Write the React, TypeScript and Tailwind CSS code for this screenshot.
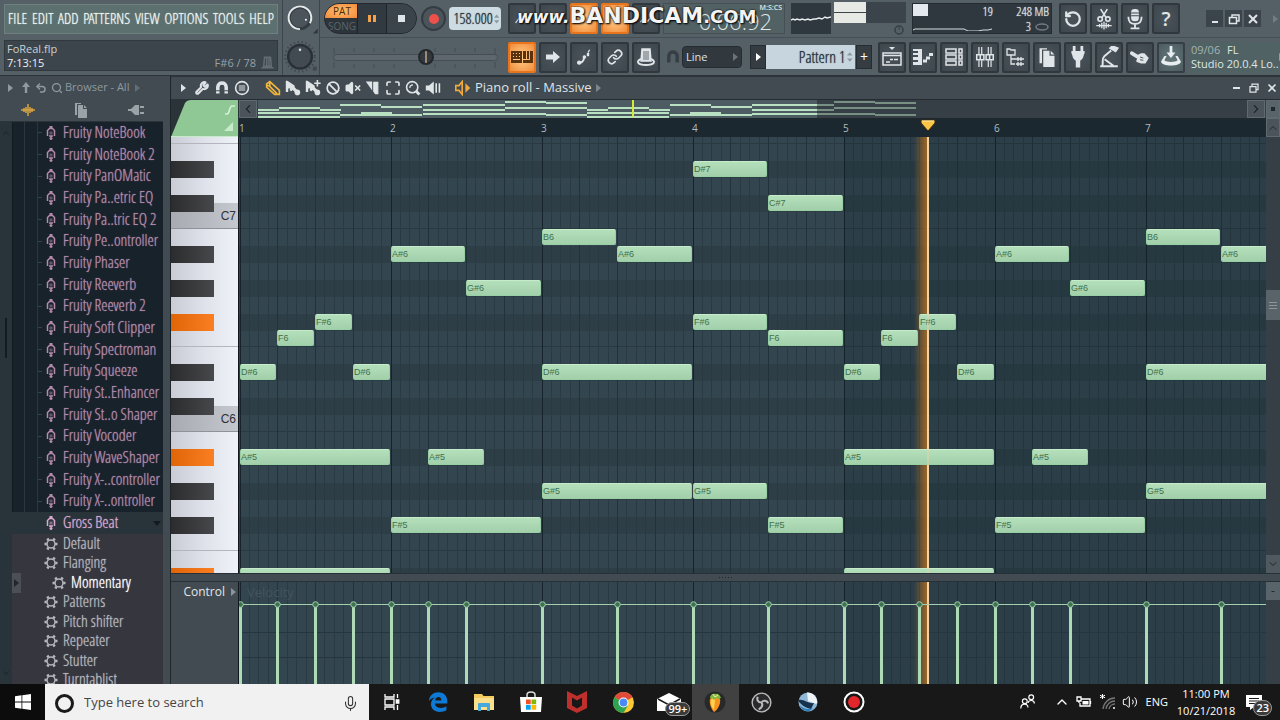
import type { ReactNode } from "react";
import {
  Ban,
  ChevronDown,
  ChevronLeft,
  ChevronRight,
  ChevronUp,
  Link,
  Maximize,
  Mic,
  RotateCcw,
  Search,
  Undo2,
  Volume2,
  VolumeX,
  Wrench,
  X,
} from "lucide-react";

const sans = "font-[family-name:'Open_Sans','Noto_Sans',sans-serif]";
const arial = "font-[family-name:'Liberation_Sans',Arial,sans-serif]";
const narrow =
  "font-light font-[family-name:'Open_Sans_Condensed_Light','Open_Sans_Condensed',sans-serif] [text-shadow:0_0_1px_currentColor]";

/* ---------- song data ---------- */

const BAR = 151;
const stepX = (step: number) => Math.floor((step * BAR) / 16) + 1;
const rowY = (row: number) => Math.round(7 + row * 16.95);

// [label, row below E7, first step, steps]
const phrase: [string, number, number, number][] = [
  ["D#6", 13, 0, 4],
  ["F6", 11, 4, 4],
  ["F#6", 10, 8, 4],
  ["D#6", 13, 12, 4],
  ["A#5", 18, 0, 16],
  ["D#5", 25, 0, 16],
  ["A#6", 6, 16, 8],
  ["G#6", 8, 24, 8],
  ["A#5", 18, 20, 6],
  ["F#5", 22, 16, 16],
  ["B6", 5, 32, 8],
  ["A#6", 6, 40, 8],
  ["D#6", 13, 32, 16],
  ["G#5", 20, 32, 16],
  ["D#7", 1, 48, 8],
  ["C#7", 3, 56, 8],
  ["F#6", 10, 48, 8],
  ["F6", 11, 56, 8],
  ["G#5", 20, 48, 8],
  ["F#5", 22, 56, 8],
];

const notes = [0, 64].flatMap((offset) =>
  phrase.map(([label, row, start, len]) => ({ label, row, start: start + offset, len }))
);

const velocitySteps = Array.from(new Set(notes.map((n) => n.start)));

const blackRows = [1, 3, 6, 8, 10, 13, 15, 18, 20, 22, 25];
const litRows = [10, 18, 25];
const cKeys = [
  { label: "C7", row: 4 },
  { label: "C6", row: 16 },
];

const plugins = [
  "Fruity NoteBook",
  "Fruity NoteBook 2",
  "Fruity PanOMatic",
  "Fruity Pa..etric EQ",
  "Fruity Pa..tric EQ 2",
  "Fruity Pe..ontroller",
  "Fruity Phaser",
  "Fruity Reeverb",
  "Fruity Reeverb 2",
  "Fruity Soft Clipper",
  "Fruity Spectroman",
  "Fruity Squeeze",
  "Fruity St..Enhancer",
  "Fruity St..o Shaper",
  "Fruity Vocoder",
  "Fruity WaveShaper",
  "Fruity X-..controller",
  "Fruity X-..ontroller",
];

const presets = ["Default", "Flanging", "Momentary", "Patterns", "Pitch shifter", "Repeater", "Stutter", "Turntablist"];

/* ---------- shared bits ---------- */

function Tri({ className = "" }: { className?: string }) {
  return (
    <svg viewBox="0 0 5 8" className={`h-2 w-[5px] shrink-0 ${className}`} fill="currentColor">
      <path d="M0 0 5 4 0 8z" />
    </svg>
  );
}

function ToolButton({
  label,
  active = false,
  tint = false,
  children,
}: {
  label: string;
  active?: boolean;
  tint?: boolean;
  children?: ReactNode;
}) {
  const look = active
    ? "border-[#e8741c] bg-radial from-[#ffd08a] to-[#f08a35] text-[#5a3210]"
    : tint
      ? "border-[#363f45] bg-radial from-[#64787a] to-[#4c5b60] text-[#e8eef0]"
      : "border-[#30373d] bg-radial from-[#4b535a] to-[#3f474e] text-[#dfe5e8]";
  return (
    <button
      aria-label={label}
      className={`flex h-[31px] w-7 shrink-0 items-center justify-center rounded-xs border-2 ${look}`}
    >
      {children}
    </button>
  );
}

function Glyph({ children, className = "size-5" }: { children: ReactNode; className?: string }) {
  return (
    <svg viewBox="0 0 20 20" className={`shrink-0 ${className}`} fill="none" stroke="currentColor" strokeWidth="1.5">
      {children}
    </svg>
  );
}

/* ---------- top toolbar ---------- */

const menus = ["FILE", "EDIT", "ADD", "PATTERNS", "VIEW", "OPTIONS", "TOOLS", "HELP"];

function MenuBlock() {
  return (
    <div className="flex w-[283px] shrink-0 flex-col gap-[6px] border-r border-[#3c454b] px-1 pt-1">
      <nav className="flex h-[30px] items-center justify-between border border-[#6f807f] bg-[#5b706f] px-[3px] pb-0.5">
        {menus.map((m) => (
          <button key={m} className={`text-[15px] leading-6 text-[#edf5f2] ${narrow}`}>
            {m}
          </button>
        ))}
      </nav>
      <div className="flex h-[31px] items-end justify-between border border-[#31393f] bg-[#3c454c] px-0.5 text-[11px] leading-[14px]">
        <div>
          <div className="text-[#c9d1d5]">FoReal.flp</div>
          <div className="text-[#eef2f4]">7:13:15</div>
        </div>
        <div className="flex items-end gap-1 text-[#98a1a7]">
          F#6 / 78
          <Glyph className="size-[15px] text-[#636d74]">
            <path d="M6 3h8l1 12H5zM9 4v10M12 4v10M2 17h16" strokeWidth="2" />
          </Glyph>
        </div>
      </div>
    </div>
  );
}

function Knobs() {
  return (
    <div className="flex w-[37px] shrink-0 flex-col items-center border-r border-[#3c454b]">
      <svg viewBox="0 0 36 38" className="h-[38px] w-9">
        <circle cx="17" cy="18" r="11" fill="#4b545b" stroke="#343c42" strokeWidth="3" />
        <path d="M17 29.500a11.500 11.500 0 1 1 10-6" fill="none" stroke="#e3e8ea" strokeWidth="2" />
        <circle cx="23" cy="20" r="1" fill="#fff" />
        <path d="M35 29v5h-5z" fill="#30383d" />
      </svg>
      <svg viewBox="0 0 36 38" className="h-[38px] w-9">
        <circle cx="17" cy="19" r="15" fill="none" stroke="#373f45" strokeWidth="2" strokeDasharray="1 3" />
        <circle cx="17" cy="19" r="12" fill="#434b52" stroke="#2a3136" strokeWidth="2.500" />
        <circle cx="17" cy="12" r="1.300" fill="#d4dadd" />
        <path d="M30 29h4v4h-4z" fill="#40484e" />
      </svg>
    </div>
  );
}

function Transport() {
  return (
    <div className="flex h-[31px] w-[93px] shrink-0 overflow-hidden rounded-2xl border border-[#23292e] bg-[#2d353b]">
      <div className="flex w-8 flex-col">
        <button className="h-[14px] bg-radial from-[#ffc06a] to-[#f3883a] pl-0.5 text-[10px] leading-[14px] text-[#4c2a0c]">
          PAT
        </button>
        <button className="flex-1 pl-0.5 text-[10px] leading-[14px] text-[#5b656c]">SONG</button>
      </div>
      <button aria-label="Pause" className="flex w-[30px] items-center justify-center gap-0.5 border-x border-[#1e2428] bg-[#323a41]">
        <span className="h-[7px] w-[3px] bg-[#f4a14a]" />
        <span className="h-[7px] w-[3px] bg-[#f4a14a]" />
      </button>
      <button aria-label="Stop" className="flex flex-1 items-center justify-center bg-[#3b444b]">
        <span className="size-[7px] bg-[#dfe5e8]" />
      </button>
    </div>
  );
}

function Spin() {
  return (
    <svg viewBox="0 0 6 12" className="h-3 w-1.5" fill="#8b99a1">
      <path d="M0 4.500 3 1l3 3.500zM0 7.500h6L3 11z" />
    </svg>
  );
}

function Watermark() {
  return (
    <div className="pointer-events-none absolute top-0 left-[9px] flex items-baseline font-[family-name:'DejaVu_Sans',sans-serif] font-bold whitespace-nowrap text-[#f4f4f4] [text-shadow:0_0_2px_#000,1px_1px_2px_#000]">
      <span className="text-[17px] leading-[26px] italic">www.</span>
      <span className="text-[22px] leading-[26px]">BANDICAM</span>
      <span className="text-lg leading-[26px]">.COM</span>
    </div>
  );
}

function TopRow() {
  return (
    <div className="flex h-[38px] items-center border-b border-[#454e54] pl-1">
      <Transport />
      <button
        aria-label="Record"
        className="ml-1 flex size-[25px] shrink-0 items-center justify-center rounded-full border-2 border-[#343c42] bg-[#4b545b]"
      >
        <span className="size-2.5 rounded-full bg-[#f0504a]" />
      </button>
      <label className="ml-[3px] flex h-[23px] w-[52px] shrink-0 items-center rounded-sm bg-[#cddbe2] pr-0.5">
        <input
          aria-label="Tempo"
          defaultValue="158.000"
          className={`w-full min-w-0 bg-transparent pr-px text-right text-[15px] text-[#27323a] ${narrow}`}
        />
        <Spin />
      </label>
      <div className="relative ml-[7px] flex shrink-0 items-center gap-[3px]">
        <ToolButton label="Typing keyboard">
          <Glyph className="size-4"><path d="M2 15 9 5l6 7" /></Glyph>
        </ToolButton>
        <ToolButton label="Countdown">
          <Glyph className="size-4"><circle cx="12" cy="9" r="5" /></Glyph>
        </ToolButton>
        <ToolButton label="Blend notes" active />
        <ToolButton label="Loop record" active />
        <ToolButton label="Step edit">
          <Glyph className="size-4"><path d="m3 14 5-6 4 5 6-8" /></Glyph>
        </ToolButton>
        <div className="relative flex h-[31px] w-[122px] items-end justify-end border border-[#454f54] bg-[#526163] pr-3 text-[22px] leading-6 font-light text-[#dfe8e6]">
          0:06.92
          <span className="absolute top-0 right-0.5 text-[7px] leading-2 font-semibold text-[#dfe8e6]">M:S:CS</span>
        </div>
        <Watermark />
      </div>
      <div className="ml-1.5 flex h-[31px] w-10 shrink-0 items-center bg-[#2f383f]">
        <svg viewBox="0 0 40 6" className="h-1.5 w-10" fill="none" stroke="#e6ecee" strokeWidth="1.500">
          <path d="M0 4l2-1 2 1 2-1 3 1 2-1 3 1 3-1 2 1 4-1 2 0 3-1 3 1 3-2 2 1 4-1" />
        </svg>
      </div>
      <div className="ml-[3px] flex w-[72px] shrink-0 flex-col items-end">
        <div className="flex h-[21px] w-full flex-col gap-px bg-[#3b444a]">
          <span className="h-2.5 w-8 bg-[#e7e9e4]" />
          <span className="h-2.5 w-8 bg-[#e7e9e4]" />
        </div>
        <svg viewBox="0 0 10 10" className="mt-0.5 mr-0.5 size-2.5">
          <circle cx="5" cy="5" r="4" fill="none" stroke="#363e44" strokeWidth="1.500" />
          <path d="M5 5V2" stroke="#363e44" />
        </svg>
      </div>
      <div className="ml-1.5 flex h-[31px] w-[140px] shrink-0 border border-[#252c31] bg-[#2f383f] text-[13px] leading-[15px] text-[#e2e8ea]">
        <div className="flex w-20 flex-col">
          <div className={`flex justify-between ${narrow}`}>
            <span className="h-3 w-[15px] bg-[#e3e9ef]" />
            <span>19</span>
          </div>
          <svg viewBox="0 0 80 12" className="h-3 w-full" fill="none" stroke="#d7dee1">
            <path d="M0 11l2-1h49l4 2h10l5-1 5 0 4-1" />
          </svg>
        </div>
        <div className={`flex flex-1 flex-col items-end pr-0.5 ${narrow}`}>
          <span>248 MB</span>
          <span className="flex items-center gap-1">
            3
            <svg viewBox="0 0 14 8" className="h-2 w-3.5">
              <ellipse cx="7" cy="4" rx="6" ry="3" fill="none" stroke="#707a80" strokeWidth="1.500" />
            </svg>
          </span>
        </div>
      </div>
      <div className="ml-[7px] flex shrink-0 gap-[3px]">
        <ToolButton label="Undo"><RotateCcw className="size-[18px]" strokeWidth={3} /></ToolButton>
        <ToolButton label="Cut">
          <Glyph className="size-[22px]">
            <path d="M7 1l5 8M13 1L8 9" />
            <circle cx="6.500" cy="10" r="2" />
            <circle cx="13.500" cy="10" r="2" />
            <path d="M3 16h14M6 14.500v3M8 13.500v5M10 12.500v7M12 13.500v5M14 14.500v3" strokeWidth="1.200" />
          </Glyph>
        </ToolButton>
        <ToolButton label="Record audio">
          <Glyph className="size-[22px]">
            <rect x="6.500" y="1" width="7" height="11" rx="3" fill="currentColor" stroke="none" />
            <path d="M6.500 4.500h7M6.500 7h7" stroke="#41494f" strokeWidth="1" />
            <path d="M4 8c0 5 2 6.500 6 6.500s6-1.500 6-6.500M10 14v4M6 18.500h8" strokeWidth="1.700" />
          </Glyph>
        </ToolButton>
        <ToolButton label="Help"><span className="text-xl leading-5 font-semibold">?</span></ToolButton>
      </div>
      <div className="ml-auto flex shrink-0 items-center gap-0.5 text-[#dfe5e8]">
        <WinButton label="Minimize"><path d="M3 9h6" strokeWidth="2" /></WinButton>
        <WinButton label="Restore"><path d="M4 4V2h7v6H9M1.500 4.500h7v6h-7z" /></WinButton>
        <WinButton label="Close"><path d="m2 2 8 8M10 2l-8 8" strokeWidth="2" /></WinButton>
      </div>
      <Tri className="mx-3 mr-0.5 text-[#737d83]" />
    </div>
  );
}

function WinButton({ label, children }: { label: string; children: ReactNode }) {
  return (
    <button aria-label={label} className="flex size-[17px] items-center justify-center bg-[#3b444a]">
      <svg viewBox="0 0 12 12" className="size-3" fill="none" stroke="currentColor" strokeWidth="1.500">
        {children}
      </svg>
    </button>
  );
}

function PitchSlider() {
  return (
    <div className="relative h-[31px] w-[165px] shrink-0">
      <svg viewBox="0 0 165 31" className="h-[31px] w-full" stroke="#434c52">
        <path d="M1 6v6M21 6v4M41 6v4M61 6v4M102 6v4M122 6v4M142 6v4M162 6v6M1 20v6M21 22v4M41 22v4M61 22v4M102 22v4M122 22v4M142 22v4M162 20v6" />
      </svg>
      <input
        type="range"
        aria-label="Main pitch"
        defaultValue={57}
        className="absolute inset-x-0 top-3 h-[7px] w-full appearance-none rounded-full border border-[#454e54] bg-[#5d676d] [&::-webkit-slider-thumb]:size-4 [&::-webkit-slider-thumb]:appearance-none [&::-webkit-slider-thumb]:rounded-full [&::-webkit-slider-thumb]:border-2 [&::-webkit-slider-thumb]:border-[#23282c] [&::-webkit-slider-thumb]:bg-linear-to-r [&::-webkit-slider-thumb]:from-[#33393e] [&::-webkit-slider-thumb]:from-40% [&::-webkit-slider-thumb]:via-[#f0c9a0] [&::-webkit-slider-thumb]:to-[#33393e] [&::-webkit-slider-thumb]:to-60%"
      />
    </div>
  );
}

function BottomRow() {
  return (
    <div className="flex h-[38px] items-center pl-[13px]">
      <PitchSlider />
      <div className="ml-2.5 flex shrink-0 gap-[3px]">
        <ToolButton label="Piano keyboard" active>
          <svg viewBox="0 0 22 12" className="h-3 w-[22px]" fill="#5a3210">
            <path d="M0 0h11v12H0z" />
            <path d="M2 2h1v1H2zm3 0h1v1H5zm3 0h1v1H8zM2 5h1v1H2zm3 0h1v1H5zm3 0h1v1H8zM2 8h7v1H2z" fill="#ffc884" />
            <path d="M12 0h3v8h-3zM16 0h2v8h-2zM19 0h3v12H12V9h7z" />
          </svg>
        </ToolButton>
        <ToolButton label="Scroll">
          <svg viewBox="0 0 16 12" className="h-3 w-4" fill="currentColor"><path d="M1 3.500h7V0l7 6-7 6V8.500H1z" /></svg>
        </ToolButton>
        <ToolButton label="Step">
          <Glyph className="size-4">
            <path d="M2 17c5 1 8-2 8-6" strokeWidth="2.500" />
            <circle cx="4" cy="17" r="2" fill="currentColor" />
            <circle cx="10.500" cy="10" r="1.500" fill="currentColor" />
            <path d="M15 9V5" strokeWidth="3" />
            <path d="M15 4.500 17 1" strokeWidth="1.500" />
          </Glyph>
        </ToolButton>
        <ToolButton label="Link"><Link className="size-4" strokeWidth={2.5} /></ToolButton>
        <ToolButton label="Metronome">
          <Glyph>
            <path d="M6 2h8l1 12H5z" fill="currentColor" />
            <path d="M8 4v9M10 4v9M12 4v9" stroke="#41494f" strokeWidth=".8" />
            <path d="M5 12c-5 2-4 6 5 6s10-4 5-6" strokeWidth="2" />
          </Glyph>
        </ToolButton>
      </div>
      <Glyph className="ml-1.5 size-3.5 text-[#373f45]"><path d="M4 18V9c0-8 12-8 12 0v9" strokeWidth="5" /></Glyph>
      <div className="relative ml-0.5 shrink-0">
        <select
          aria-label="Snap"
          className="block h-[22px] w-[60px] appearance-none rounded-sm border border-[#262d32] bg-[#31393f] pl-[3px] text-[11px] text-[#dde3e6]"
        >
          <option>Line</option>
        </select>
        <Tri className="pointer-events-none absolute top-[7px] right-1 text-[#68737a]" />
      </div>
      <button aria-label="Play pattern" className="ml-2 flex h-6 w-4 shrink-0 items-center justify-center border border-[#262d32] bg-[#353d43] text-white">
        <Tri />
      </button>
      <div className="flex h-6 w-[89px] shrink-0 items-center bg-[#c6d5de] pr-0.5">
        <select
          aria-label="Pattern"
          className={`w-full min-w-0 appearance-none pr-0.5 text-base text-[#26313a] [text-align-last:right] ${narrow}`}
        >
          <option>Pattern 1</option>
        </select>
        <Spin />
      </div>
      <button aria-label="Add pattern" className="ml-px flex h-6 w-4 shrink-0 items-center justify-center border border-[#262d32] bg-[#353d43] text-sm text-white">
        +
      </button>
      <div className="ml-1.5 flex shrink-0 gap-[3px]">
        <ToolButton label="Playlist">
          <Glyph><path d="M1 6h18v12H1zM1 8.500h18M4 15h4M8 12.500h3M12 12.500h4" /><path d="M7 0h6l-3 3z" fill="currentColor" stroke="none" /></Glyph>
        </ToolButton>
        <ToolButton label="Piano roll">
          <Glyph><path d="M0 2h9v16H0v-3h5v-2H0v-3h5V8H0V6h5V4H0z" fill="currentColor" stroke="none" /><path d="M10 14h4M13 11h4M16 7.500h4" strokeWidth="3" /></Glyph>
        </ToolButton>
        <ToolButton label="Channel rack">
          <Glyph><path d="M2 2h10v4H2zM2 8h10v4H2zM2 14h10v4H2zM15 2h3v4h-3zM15 8h3v4h-3zM15 14h3v4h-3z" /></Glyph>
        </ToolButton>
        <ToolButton label="Mixer">
          <Glyph className="size-[22px]">
            <path d="M4.500 1v7M7 1v7M4.500 13v6M7 13v6M13 1v7M15.500 1v7M13 13v6M15.500 13v6" strokeWidth="1.100" />
            <path d="M2.500 8h6.500v4.500H2.500zM11 8h6.500v4.500H11zM5.700 8v4.500M14.200 8v4.500" strokeWidth="1.400" />
          </Glyph>
        </ToolButton>
        <ToolButton label="Browser">
          <Glyph><path d="M1 2h3l1 1h4v5H1zM5 8v9h4M5 12h5M10 12h8M10 17h8M12 10v4M15 10v4M12 15v4M15 15v4" strokeWidth="1.300" /></Glyph>
        </ToolButton>
        <ToolButton label="Project files"><Files className="size-5" /></ToolButton>
        <ToolButton label="Plugins">
          <Glyph className="size-[22px]"><path d="M6.500 0v5M13.500 0v5" strokeWidth="2.500" /><path d="M4 4.500h12v2c-1 1-1 4-2 5l-2 2v6H8v-6l-2-2c-1-1-1-4-2-5z" fill="currentColor" stroke="none" /></Glyph>
        </ToolButton>
        <ToolButton label="Tempo tapper">
          <Glyph className="size-[22px]"><path d="m11 2 5 3 2-3-5-2z" fill="currentColor" /><path d="M12 4 6 9M6 9c-3 3-1 5-2 9M6 12l8 6M2 18.500h16" strokeWidth="1.800" /></Glyph>
        </ToolButton>
        <ToolButton label="Touch">
          <Glyph className="size-[22px]">
            <path d="M1 6q1-2 3-.5L8 8l3-1.500h3L18 11l-3 5h-4l-4-1.500q-1-1 0-2l.5-1L1.500 8Q.5 7 1 6z" fill="currentColor" stroke="none" />
            <path d="m10 10 3 1M10 12.500l3 .5" stroke="#41494f" strokeWidth=".8" />
          </Glyph>
        </ToolButton>
        <ToolButton label="Download" tint>
          <Glyph className="size-[22px]">
            <path d="M10 0v7" strokeWidth="2.500" />
            <path d="m6 6 4 5 4-5z" fill="currentColor" stroke="none" />
            <path d="M4 9 1 14c0 5 18 5 18 0l-3-5h-2l2 4c-2 2-10 2-12 0l2-4z" fill="currentColor" stroke="none" />
          </Glyph>
        </ToolButton>
      </div>
      <div className="ml-1 flex h-[31px] min-w-0 flex-1 items-center justify-between bg-[#506264] pr-0.5 pl-0.5 text-[11px] leading-[14px] whitespace-nowrap text-[#dce8e4]">
        <div>
          <div><span className="mr-1 text-[#a3b3b1]">09/06</span> FL</div>
          <div>Studio 20.0.4 Lo..</div>
        </div>
        <Tri className="text-[#8fa09f]" />
      </div>
    </div>
  );
}

function Files({ className = "" }: { className?: string }) {
  return (
    <svg viewBox="0 0 16 16" className={className} fill="currentColor">
      <path d="M2 1h6v1H4v11H2z" />
      <path d="M5 3h5v4h4v9H5zM11 3l3 3h-3z" />
    </svg>
  );
}

/* ---------- browser ---------- */

function PlugIcon() {
  return (
    <svg viewBox="0 0 10 14" className="h-3.5 w-2.5 shrink-0" fill="none" stroke="currentColor">
      <path d="M1.500 10V4.500L3.500 2.500h3l2 2V10" strokeWidth="1.500" />
      <path d="M3.500 0h3v2h-3z" fill="currentColor" stroke="none" />
      <path d="M3.500 5.500h3v3h-3z" fill="currentColor" stroke="none" opacity=".5" />
      <path d="M3 10h4M5 10v4M3.500 12.500h3" strokeWidth="1.500" />
    </svg>
  );
}

function GearIcon() {
  return (
    <svg viewBox="0 0 14 14" className="size-3.5 shrink-0" fill="none" stroke="currentColor">
      <circle cx="7" cy="7" r="4" strokeWidth="1.500" />
      <path d="M4.500 3.200 3.300 1.500M9.500 3.200l1.200-1.700M2.800 7H.5M11.200 7h2.300M4.500 10.800l-1.200 1.700M9.500 10.800l1.200 1.700" strokeWidth="2.500" />
    </svg>
  );
}

function Browser() {
  return (
    <aside className="flex w-[163px] shrink-0 flex-col bg-[#414b51]">
      <header className="flex h-[23px] items-center pl-2 text-[11px] text-[#8f999f]">
        <Tri />
        <svg viewBox="0 0 10 12" className="ml-2 h-3 w-2.5" fill="currentColor"><path d="M5 0l4 5H6.200v6H3.800V5H1z" /></svg>
        <Undo2 className="ml-1 size-3" strokeWidth={3} />
        <Search className="mr-0.5 ml-1 size-3" strokeWidth={2.5} />
        <span className="whitespace-nowrap">Browser - All</span>
        <Tri className="ml-1.5 text-[#646e74]" />
      </header>
      <div className="flex h-[23px] items-center justify-around border-b border-[#2b343a] pl-0.5 text-[#9aa3a8]">
        <button aria-label="Sounds" className="text-[#d9a441]">
          <svg viewBox="0 0 14 12" className="h-3 w-3.5" stroke="currentColor" strokeWidth="1.500"><path d="M0 6h14M3 4v4M5 3v6M7 0v12M9 3v6M11 4v4" /></svg>
        </button>
        <button aria-label="Files"><Files className="size-4" /></button>
        <button aria-label="Plugin database">
          <svg viewBox="0 0 16 12" className="h-3 w-4" fill="currentColor"><path d="M0 5h3l4-4h4v10H7L3 7H0zM12 2h4v2h-4zM12 8h4v2h-4z" /></svg>
        </button>
      </div>
      <div className="flex min-h-0 flex-1">
        <div className="flex w-3 shrink-0 flex-col items-center bg-[#29333a] py-1.5 text-[#151d22]">
          <ChevronUp className="size-2.5" />
          <span className="mt-[180px] mb-auto h-10 w-0.5 bg-[#141c21]" />
          <ChevronDown className="size-2.5" />
        </div>
        <div className={`min-w-0 flex-1 overflow-hidden bg-[#17222a] text-base leading-[18px] whitespace-nowrap ${narrow}`}>
          <ul className="flex h-[390px] flex-col border-l border-[#111a20] pl-[11px] text-[#b58aac]">
            {plugins.map((p) => (
              <li key={p} className="flex flex-1 items-center border-l border-[#2b373e] pl-3">
                <span className="flex h-full items-center border-l border-[#2b373e]">
                  <span className="mr-1 h-px w-1 bg-[#35424a]" />
                </span>
                <PlugIcon />
                <span className="ml-[7px] pb-0.5">{p}</span>
              </li>
            ))}
          </ul>
          <div className="flex h-[22px] items-center bg-[#28343a] pr-0.5 pl-[34px] text-[#dba9d2]">
            <PlugIcon />
            <span className="mr-auto ml-[7px] pb-0.5">Gross Beat</span>
            <svg viewBox="0 0 8 5" className="h-[5px] w-2" fill="#121a1f"><path d="M0 0h8L4 5z" /></svg>
          </div>
          <ul className="flex h-[156px] flex-col bg-[#35363e] text-[#b6b8bf]">
            {presets.map((p) =>
              p === "Momentary" ? (
                <li key={p} className="flex min-h-0 flex-1 items-center text-white">
                  <span className="flex h-full w-[9px] items-center justify-center bg-[#4d4f57] text-[#24262b]"><Tri /></span>
                  <span className="ml-[31px] text-[#b6b8bf]"><GearIcon /></span>
                  <span className="ml-[5px] pb-0.5">{p}</span>
                </li>
              ) : (
                <li key={p} className="flex min-h-0 flex-1 items-center pl-8">
                  <GearIcon />
                  <span className="ml-[5px] pb-0.5">{p}</span>
                </li>
              )
            )}
          </ul>
        </div>
      </div>
    </aside>
  );
}

/* ---------- piano roll ---------- */

function RollTools() {
  return (
    <header className="flex h-[23px] shrink-0 items-center border-t border-[#2c3439] bg-[#424b52] pl-2.5 text-[#dfe4e7]">
      <Tri />
      <div className="ml-1.5 flex">
        <Tool label="Options"><Wrench className="size-3.5" strokeWidth={3.5} /></Tool>
        <Tool label="Magnet">
          <Glyph className="size-3.5"><path d="M4 18V9c0-8 12-8 12 0v9" strokeWidth="5" /><path d="M1 14h6M13 14h6" stroke="#424b52" strokeWidth="1.500" /></Glyph>
        </Tool>
        <Tool label="Stamp"><Glyph className="size-4"><circle cx="10" cy="10" r="8" strokeWidth="2" /><path d="M6 7.500h8M6 10h8M6 12.500h8" /></Glyph></Tool>
      </div>
      <div className="ml-[11px] flex">
        <Tool label="Draw"><Glyph className="size-4 text-[#f0b53c]"><path d="m2 5 4-3 12 11v5h-6L2 9zM6 3v5l9 9M2 7h5" strokeWidth="2" /></Glyph></Tool>
        <Tool label="Paint"><Brush /></Tool>
        <Tool label="Paint drums"><Brush plus /></Tool>
        <Tool label="Delete"><Ban className="size-3.5" strokeWidth={3} /></Tool>
        <Tool label="Mute"><VolumeX className="size-4 fill-current" strokeWidth={2.5} /></Tool>
        <Tool label="Slice"><Glyph className="size-4"><path d="M1 2h8v11z" fill="currentColor" stroke="none" /><path d="M11 3h5v14h-3l-2-3z" fill="currentColor" /></Glyph></Tool>
        <Tool label="Select"><Maximize className="size-4" strokeWidth={2.5} /></Tool>
        <Tool label="Zoom"><Glyph className="size-4"><circle cx="9" cy="9" r="7" strokeWidth="2" /><path d="M6 10c0-3 2-4 4-4" /><path d="m14 14 4 4" strokeWidth="3.500" /></Glyph></Tool>
        <Tool label="Playback"><Glyph className="size-4"><path d="M1 7h4l6-5v16l-6-5H1z" fill="currentColor" stroke="none" /><path d="M14 4v12M18 4v12" strokeWidth="2" /></Glyph></Tool>
      </div>
      <Glyph className="ml-3 size-4 text-[#f0a93c]"><path d="M1 7h4l4-5v16l-4-5H1z" strokeWidth="2" /><path d="m13 4 6 6-6 6z" fill="currentColor" stroke="none" /></Glyph>
      <h1 className="ml-1 text-[13px]">Piano roll - Massive</h1>
      <Tri className="ml-1 text-[#7d878d]" />
      <div className="ml-auto flex items-center gap-[7px] pr-0.5">
        <Glyph className="size-2.5"><path d="M2 10h14" strokeWidth="4" /></Glyph>
        <Glyph className="size-2.5"><path d="M6 6V2h12v11h-4M2 7h12v11H2z" strokeWidth="2.500" /></Glyph>
        <X className="size-3" strokeWidth={3.5} />
      </div>
    </header>
  );
}

function Tool({ label, children }: { label: string; children: ReactNode }) {
  return (
    <button aria-label={label} className="flex w-5 items-center justify-center">
      {children}
    </button>
  );
}

function Brush({ plus = false }: { plus?: boolean }) {
  return (
    <Glyph className="size-4">
      <path d="M1 1h2l9 6v3l-4 4-2-1v-3l-2 1v4H1z" fill="currentColor" stroke="none" />
      <path d="m10 10 4 4" strokeWidth="4" />
      <circle cx="15.500" cy="15.500" r="3.500" fill="currentColor" stroke="none" />
      {plus && <path d="M15.500 0v8M11.500 4h8" strokeWidth="2" />}
    </Glyph>
  );
}

const MINI_BAR = 82.3;

function Overview() {
  return (
    <div className="flex h-[19px] shrink-0 border-t border-[#242c31] bg-[#353f45]">
      <button aria-label="Scroll left" className="flex w-[18px] items-center justify-center border border-[#60696f] bg-[#4a545a] text-[#20272b]">
        <ChevronLeft className="size-3.5" />
      </button>
      <svg className="ml-px h-[18px] min-w-0 flex-1" shapeRendering="crispEdges">
        <rect width="559" height="18" fill="#4d5c62" />
        {notes.map((n, i) => (
          <rect
            key={i}
            x={Math.round((n.start * MINI_BAR) / 16)}
            y={Math.floor(n.row * 0.625) + 1}
            width={Math.round((n.len * MINI_BAR) / 16)}
            height="2"
            fill="#b9e0c0"
          />
        ))}
        <rect x="559" width="100" height="18" fill="#353f45" opacity=".5" />
        <rect x="374" width="2" height="17" fill="#d6ea3a" />
      </svg>
      <button aria-label="Scroll right" className="flex w-[18px] items-center justify-center border border-[#60696f] bg-[#4a545a] text-[#20272b]">
        <ChevronRight className="size-3.5" />
      </button>
      <button aria-label="Zoom" className="ml-px flex w-[14px] items-center justify-center border border-[#60696f] bg-[#59636a]">
        <span className="size-1 bg-[#20272b]" />
      </button>
    </div>
  );
}

function Ruler() {
  return (
    <div className="flex h-[19px] shrink-0 bg-linear-to-b from-[#1d282f] to-[#1b2830]">
      <div className="relative flex min-w-0 flex-1 overflow-hidden">
        {[1, 2, 3, 4, 5, 6, 7].map((n) => (
          <span key={n} className="w-[151px] shrink-0 text-[10px] leading-5 text-[#b3bdc2]">
            {n}
          </span>
        ))}
        <svg viewBox="0 0 16 13" className="absolute top-px left-[681px] h-[13px] w-4">
          <path d="M1 1h14v3L8 12 1 4z" fill="#f9c544" stroke="#3c2a12" />
          <path d="M2 2h12" stroke="#ffe9a8" />
        </svg>
      </div>
      <button aria-label="Scroll up" className="flex w-[14px] items-center justify-center border border-[#60696f] bg-[#4a545a] text-[#20272b]">
        <ChevronUp className="size-3" />
      </button>
    </div>
  );
}

function Keys() {
  return (
    <div className="relative w-[67px] shrink-0 overflow-hidden bg-linear-to-r from-[#c9ccd4] via-[#dfe2ea] to-[#f0f2f8]">
      {[0, 12, 24].map((r) => (
        <span key={r} className="absolute inset-x-0 h-px bg-[#b3b6bd]" style={{ top: rowY(r) - 1 }} />
      ))}
      {cKeys.map((k) => (
        <span
          key={k.label}
          className={`absolute inset-x-0 flex h-[26px] items-center justify-end border-b border-[#8f9299] bg-linear-to-r from-[#a8aab1] to-[#c6c8cf] pr-0.5 text-xs text-[#2e3136] ${arial}`}
          style={{ top: rowY(k.row) - 9 }}
        >
          {k.label}
        </span>
      ))}
      {blackRows.map((r) => (
        <span
          key={r}
          className={`absolute left-0 h-[17px] w-[43px] ${
            litRows.includes(r)
              ? "bg-linear-to-r from-[#e06505] to-[#fa7f22]"
              : "bg-linear-to-r from-[#2c2c2e] to-[#47484b]"
          }`}
          style={{ top: rowY(r) }}
        />
      ))}
    </div>
  );
}

function GridLines() {
  const lines = Array.from({ length: 113 }, (_, i) => i);
  return (
    <>
      {lines.map((i) => (
        <rect
          key={i}
          x={stepX(i)}
          width="1"
          height="100%"
          fill={i % 16 === 0 ? "#17232a" : i % 4 === 0 ? "#22323a" : "#2a3a43"}
        />
      ))}
      <rect x={stepX(64)} width="100%" height="100%" fill="#0e1c24" opacity=".16" />
    </>
  );
}

function Playhead() {
  return (
    <span className="absolute inset-y-0 left-[675px] w-[15px] border-r-2 border-[#f6d2a4] bg-linear-to-r from-transparent to-[#b8701f]/80" />
  );
}

function NoteGrid() {
  return (
    <div className="relative min-w-0 flex-1 overflow-hidden bg-[#33454e]">
      <svg className="absolute inset-0 size-full" shapeRendering="crispEdges">
        {blackRows.map((r) => (
          <rect key={r} y={rowY(r)} width="100%" height="17" fill="#2d3e46" />
        ))}
        {[0, 5, 12, 17, 24].map((r) => (
          <rect key={r} y={rowY(r) - 1} width="100%" height="1" fill="#293941" />
        ))}
        <GridLines />
      </svg>
      <Playhead />
      {notes.map((n, i) => (
        <button
          key={i}
          className={`absolute h-4 overflow-hidden rounded-xs border border-[#98cfa4] border-t-[#c5ebcb] bg-linear-to-b from-[#b4dfbb] to-[#a2d0ab] text-left text-[9px] leading-[14px] text-[#41704c] ${arial}`}
          style={{
            left: stepX(n.start),
            top: rowY(n.row),
            width: stepX(n.start + n.len) - stepX(n.start) - 1,
          }}
        >
          {n.label}
        </button>
      ))}
      <span className="absolute inset-y-0 left-[688px] w-0.5 bg-[#f6d2a4]/40" />
    </div>
  );
}

function VelocityLane() {
  return (
    <div className="relative min-w-0 flex-1 overflow-hidden bg-[#33454e]">
      <svg className="absolute inset-0 size-full">
        <g shapeRendering="crispEdges">
          <GridLines />
          <path d="M0 50.500h1100M0 75.500h1100" stroke="#26363f" />
        </g>
      </svg>
      <span className="absolute top-0 left-2 text-[13px] leading-5 text-[#43545c]">Velocity</span>
      <Playhead />
      <svg className="absolute inset-0 size-full">
        <path d="M0 22.500h1100" stroke="#a5cfae" />
        {velocitySteps.map((s) => (
          <g key={s}>
            <rect x={stepX(s) - 1} y="24" width="3" height="90" fill="#aedbb6" />
            <circle cx={stepX(s) + 0.5} cy="22.500" r="2.800" fill="#3d7350" stroke="#9fcca9" />
          </g>
        ))}
      </svg>
    </div>
  );
}

function PianoRoll() {
  return (
    <main className="flex min-w-0 flex-1 flex-col">
      <RollTools />
      <div className="flex h-[38px] shrink-0 bg-[#2a3338]">
        <svg viewBox="0 0 67 38" className="w-[67px] shrink-0">
          <path d="M0 38 14 4q2-3 6-3h47v37z" fill="#8fc795" />
          <path d="M0 37.500h67" stroke="#c7e9cb" />
          <path d="M54 15h2c3 0 2-8 5-8h3" fill="none" stroke="#d7f2da" strokeWidth="1.500" />
          <path d="M62 23v9h-9z" fill="#c6ecca" />
        </svg>
        <div className="flex min-w-0 flex-1 flex-col pl-px">
          <Overview />
          <Ruler />
        </div>
      </div>
      <div className="flex min-h-0 flex-1">
        <Keys />
        <div className="w-px shrink-0 bg-[#10181d]" />
        <NoteGrid />
        <div className="flex w-[14px] shrink-0 flex-col bg-[#363f45]">
          <span className="mt-[153px] flex h-[30px] flex-col items-center justify-center gap-0.5 bg-[#59646a]">
            <i className="h-px w-2 bg-[#8c969b]" />
            <i className="h-px w-2 bg-[#8c969b]" />
            <i className="h-px w-2 bg-[#8c969b]" />
          </span>
          <button aria-label="Scroll down" className="mt-auto flex h-[18px] items-center justify-center bg-[#4f595f] text-[#20272b]">
            <ChevronDown className="size-3" />
          </button>
        </div>
      </div>
      <div className="flex h-[9px] shrink-0 items-center justify-center gap-0.5 border-y border-[#273036] bg-[#414b51]">
        {[0, 1, 2, 3, 4].map((i) => (
          <i key={i} className="size-px bg-[#20272b]" />
        ))}
      </div>
      <div className="flex h-[102px] shrink-0">
        <div className="flex w-[67px] shrink-0 items-start justify-end gap-1.5 bg-[#414b51] pr-0.5 text-xs leading-5 text-[#e2e7e9]">
          Control
          <Tri className="mt-1.5 text-[#8a9499]" />
        </div>
        <div className="w-px shrink-0 bg-[#10181d]" />
        <VelocityLane />
        <div className="w-[14px] shrink-0 bg-[#363f45]">
          <button aria-label="Collapse" className="block h-[18px] w-full bg-[#59646a] text-xs leading-4 text-[#20272b]">
            -
          </button>
        </div>
      </div>
    </main>
  );
}

/* ---------- taskbar ---------- */

function Cell({ label, active = false, children }: { label: string; active?: boolean; children: ReactNode }) {
  return (
    <button
      aria-label={label}
      className={`relative flex h-full flex-1 items-center justify-center ${active ? "bg-[#414141]" : ""}`}
    >
      {children}
    </button>
  );
}

function Taskbar() {
  return (
    <footer className="flex h-9 shrink-0 items-center bg-[#191818] text-white">
      <button aria-label="Start" className="flex h-full w-[45px] shrink-0 items-center justify-center bg-[#0c0c0c]">
        <svg viewBox="0 0 16 16" className="size-4" fill="#fff">
          <path d="M0 2.200 6.500 1.300v6.300H0zM7.300 1.200 16 0v7.600H7.300zM0 8.400h6.500v6.300L0 13.800zM7.300 8.400H16V16l-8.700-1.200z" />
        </svg>
      </button>
      <label className="flex h-full w-[324px] shrink-0 items-center bg-[#f1f1f1] px-2.5 pt-0.5">
        <span className="size-[19px] shrink-0 rounded-full border-[3px] border-[#1a1a1a]" />
        <input
          aria-label="Search"
          placeholder="Type here to search"
          className="ml-2.5 min-w-0 flex-1 text-[13px] placeholder:text-[#454545]"
        />
        <Mic className="size-[17px] text-[#333]" strokeWidth={1.5} />
      </label>
      <div className="flex h-full w-[508px] shrink-0">
        <Cell label="Task view">
          <svg viewBox="0 0 16 16" className="size-4" fill="none" stroke="#fff" strokeWidth="1.300">
            <path d="M1 0v3h9V0M1 5h9v6H1zM1 16v-3h9v3M13.500 0v4M13.500 11v5" />
            <path d="M12.300 6h2.500v3h-2.500z" fill="#fff" />
          </svg>
        </Cell>
        <Cell label="Edge">
          <svg viewBox="0 0 20 20" className="size-5" fill="#0f7ad6">
            <path d="M.8 9C1.500 3.500 5.500.3 10.300.3c6 0 9 4.200 9 9.200v2H7c.1 3 2.800 4.400 5.800 4.400 2 0 4-.6 5.600-1.600v4c-1.800 1-4.200 1.600-6.700 1.600-5.500 0-8.700-3.300-8.700-7.600 0-3 1.500-5.400 4.100-6.700C4 6.200 2 7.200.8 9zm6.400-.6h6.200c0-2-1-3.300-3-3.300-1.800 0-3 1.500-3.200 3.300z" />
          </svg>
        </Cell>
        <Cell label="File Explorer">
          <svg viewBox="0 0 20 18" className="h-[18px] w-5">
            <path d="M0 1h8l1.500 2H20v14H0z" fill="#f3cb5e" />
            <path d="M0 5h20v12H0z" fill="#fbe08c" />
            <path d="M4 18v-7q0-1 1-1h10q1 0 1 1v7h-3v-4H7v4z" fill="#44a9dd" />
          </svg>
        </Cell>
        <Cell label="Store">
          <svg viewBox="0 0 22 22" className="size-[22px]">
            <path d="M7 6V4q0-3 4-3t4 3v2" fill="none" stroke="#ddd" strokeWidth="1.500" />
            <path d="M0 6h22l-1 15H1z" fill="#fff" />
            <path d="M6 8.500h4.700v4.700H6z" fill="#f25022" />
            <path d="M11.500 8.500h4.700v4.700h-4.700z" fill="#7fba00" />
            <path d="M6 14h4.700v4.700H6z" fill="#00a4ef" />
            <path d="M11.500 14h4.700v4.700h-4.700z" fill="#ffb900" />
          </svg>
        </Cell>
        <Cell label="McAfee">
          <svg viewBox="0 0 20 22" className="h-[22px] w-5">
            <path d="M0 0l10 5 10-5v17l-10 5-10-5z" fill="#bf2f2c" />
            <path d="M5 6.500l5 3 5-3v8l-5 3-5-3z" fill="#191818" />
          </svg>
        </Cell>
        <Cell label="Chrome">
          <svg viewBox="0 0 20 20" className="size-[21px]">
            <circle cx="10" cy="10" r="10" fill="#fcc934" />
            <path d="M10 10 1.340 5A10 10 0 0 1 18.660 5z" fill="#e04a3b" />
            <path d="M10 10 1.340 5A10 10 0 0 0 10 20l4-7z" fill="#2ea350" />
            <circle cx="10" cy="10" r="4.700" fill="#fff" />
            <circle cx="10" cy="10" r="3.700" fill="#4a8af4" />
          </svg>
        </Cell>
        <Cell label="Mail">
          <svg viewBox="0 0 24 18" className="h-[18px] w-6">
            <path d="M0 6 12 0l12 6v12H0z" fill="#fff" />
            <path d="m1 6 11 6 11-6" fill="none" stroke="#191818" strokeWidth="1.500" />
          </svg>
          <span className="absolute right-0.5 bottom-1 rounded-full border border-[#999] bg-[#3a3a3a] px-0.5 text-[11px] leading-3 font-semibold">
            99+
          </span>
        </Cell>
        <Cell label="FL Studio" active>
          <svg viewBox="0 0 22 22" className="size-[22px]">
            <circle cx="11" cy="11" r="10.500" fill="#26282a" />
            <path d="M6 8c2-3 8-3 10 0 1 4-2 11-6 13-3-3-5-9-4-13z" fill="#f7931e" />
            <path d="M7 9c1-2 3-2 4-1 0 5-1 8-1 11-2-2-4-7-3-10z" fill="#ffd34d" />
            <path d="M6 7c0-3 3-5 5-4 3-1 5 1 6 4l-3 1-2-1-2 2-2-2z" fill="#86b93c" />
            <path d="M9 3l2 3 3-2" fill="none" stroke="#e6efc0" />
          </svg>
        </Cell>
        <Cell label="OBS">
          <svg viewBox="0 0 22 22" className="size-[21px]" fill="none" stroke="#b9b9b9" strokeWidth="1.500">
            <circle cx="11" cy="11" r="9.800" fill="#2a2a2c" />
            <path d="M11 11c-4 0-5-3-4-6M11 11c2-3 6-2 7 1M11 11c2 3 0 6-3 7" strokeWidth="2.200" />
          </svg>
        </Cell>
        <Cell label="Browser sphere">
          <svg viewBox="0 0 20 20" className="size-5">
            <circle cx="10" cy="10" r="9.500" fill="#8fb9d6" />
            <path d="M9 .6a9.500 9.500 0 0 1 10 11c-3 1-5-2-9-2z" fill="#eef3f6" />
            <path d="M1 8c5-1 9 4 15 3l-3 6c-5-1-8-3-12-7z" fill="#16324c" />
            <path d="M2 13c3 4 9 5 13 3-3 5-11 4-13-3z" fill="#2c7fc0" />
          </svg>
        </Cell>
        <Cell label="Bandicam">
          <svg viewBox="0 0 22 22" className="size-[22px]">
            <circle cx="11" cy="11" r="9.500" fill="#191818" stroke="#fff" strokeWidth="2" />
            <circle cx="11" cy="11" r="6" fill="#e3262b" />
          </svg>
        </Cell>
      </div>
      <div className="ml-auto flex shrink-0 items-center pr-1.5 text-[11px]">
        <Glyph className="size-4"><circle cx="6" cy="9" r="3" /><path d="M1 18c0-7 9-7 9-1" /><circle cx="14" cy="4" r="3" /><path d="M10 11c1-4 8-4 8 1" /></Glyph>
        <ChevronUp className="ml-[18px] size-4" />
        <svg viewBox="0 0 16 12" className="ml-1.5 h-3 w-4" fill="none" stroke="#fff" strokeWidth="1.300">
          <path d="M5 3h9v7H4V7M14.500 5v3M1 1h4v4H1zM3 5v2" />
          <path d="M6.500 5h6v3.500h-6z" fill="#fff" stroke="none" />
        </svg>
        <svg viewBox="0 0 16 16" className="ml-2 size-4" fill="none" stroke="#777" strokeWidth="1.300">
          <path d="M3 15A12 12 0 0 1 15 4M6 15a9 9 0 0 1 9-8M9 15a6 6 0 0 1 6-5" />
          <circle cx="14" cy="14" r="1" fill="#fff" stroke="none" />
          <path d="M2.500 0v5M0 1.200l5 2.600M5 1.200 0 3.800" stroke="#fff" strokeWidth="1" />
        </svg>
        <Volume2 className="ml-1.5 size-4" strokeWidth={1.5} />
        <span className="ml-2">ENG</span>
        <div className="ml-2 w-[60px] text-center text-[11px] leading-[17px] whitespace-nowrap">
          <div>11:00 PM</div>
          <div>10/21/2018</div>
        </div>
        <div className="relative ml-2.5 flex h-7 w-7 items-center">
          <svg viewBox="0 0 16 15" className="h-[15px] w-4">
            <path d="M0 0h16v12H8l-4 3v-3H0z" fill="#fff" />
            <path d="M3 3.500h10M3 6h10M3 8.500h10" stroke="#191818" />
          </svg>
          <span className="absolute right-0.5 bottom-0 rounded-full border border-[#999] bg-[#3a3a3a] px-0.5 text-[11px] leading-[14px] font-semibold">
            23
          </span>
        </div>
      </div>
    </footer>
  );
}

export default function App() {
  return (
    <div className={`flex h-screen flex-col overflow-hidden bg-[#3d474d] ${sans}`}>
      <div className="flex h-[76px] shrink-0 border-b border-[#2c3439] bg-[#555f66]">
        <MenuBlock />
        <Knobs />
        <div className="min-w-0 flex-1">
          <TopRow />
          <BottomRow />
        </div>
      </div>
      <div className="flex min-h-0 flex-1">
        <Browser />
        <div className="w-2 shrink-0 border-r border-[#1d262b] bg-[#414b51]" />
        <PianoRoll />
      </div>
      <Taskbar />
    </div>
  );
}
